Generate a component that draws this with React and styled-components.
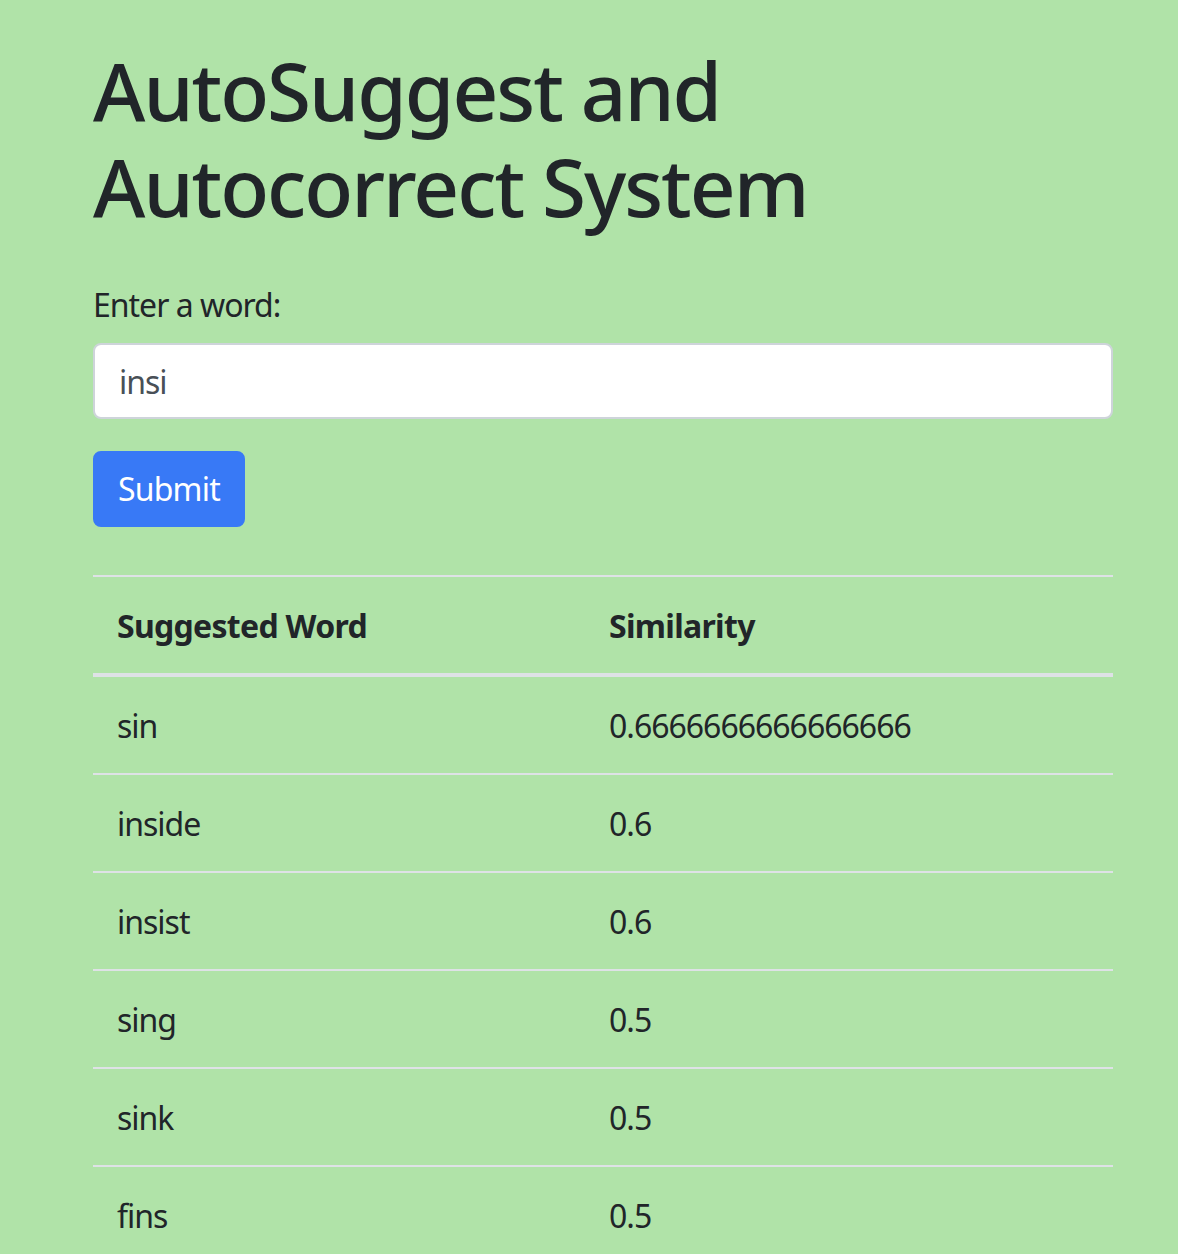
import React from "react";
import styled, { createGlobalStyle } from "styled-components";

const GlobalStyle = createGlobalStyle`
  * { box-sizing: border-box; }
  html, body { margin: 0; padding: 0; }
  body {
    background: #b0e3a8;
    color: #212529;
    font-family: "Noto Sans", "Open Sans", sans-serif;
    font-size: 32px;
    line-height: 48px;
    letter-spacing: -1px;
  }
`;

const Page = styled.main`
  padding: 42px 0 0 93px;
  width: 1113px;
`;

const Title = styled.h1`
  margin: 0 0 47px;
  font-size: 80px;
  line-height: 96px;
  font-weight: 500;
  letter-spacing: -2px;
`;

const Form = styled.form`
  display: flex;
  flex-direction: column;
  align-items: flex-start;
`;

const Label = styled.label`
  display: block;
  margin-bottom: 14px;
`;

const Input = styled.input`
  width: 100%;
  height: 76px;
  padding: 12px 24px;
  border: 2px solid #ced4da;
  border-radius: 8px;
  background: #fff;
  color: #495057;
  font: inherit;
  letter-spacing: inherit;
  outline: none;
  margin-bottom: 32px;
`;

const Button = styled.button`
  height: 76px;
  padding: 12px 23px;
  border: 2px solid #3879f6;
  border-radius: 8px;
  background: #3879f6;
  color: #fff;
  font: inherit;
  letter-spacing: -0.8px;
  cursor: pointer;
`;

const Table = styled.table`
  width: 100%;
  margin-top: 48px;
  border-collapse: collapse;
`;

const Th = styled.th`
  text-align: left;
  font-weight: 700;
  padding: 25px 24px 23px;
  border-top: 2px solid #dee2e6;
  border-bottom: 4px solid #dee2e6;
  width: ${(p) => p.$w || "auto"};
  letter-spacing: -0.7px;
`;

const Td = styled.td`
  padding: 25px 24px 23px;
  border-top: 2px solid #dee2e6;
`;

const rows = [
  ["sin", "0.6666666666666666"],
  ["inside", "0.6"],
  ["insist", "0.6"],
  ["sing", "0.5"],
  ["sink", "0.5"],
  ["fins", "0.5"],
];

export default function App() {
  return (
    <>
      <GlobalStyle />
      <Page>
        <Title>
          AutoSuggest and
          <br />
          Autocorrect System
        </Title>
        <Form onSubmit={(e) => e.preventDefault()}>
          <Label htmlFor="word">Enter a word:</Label>
          <Input id="word" defaultValue="insi" />
          <Button type="submit">Submit</Button>
        </Form>
        <Table>
          <thead>
            <tr>
              <Th $w="492px">Suggested Word</Th>
              <Th>Similarity</Th>
            </tr>
          </thead>
          <tbody>
            {rows.map(([w, s]) => (
              <tr key={w}>
                <Td>{w}</Td>
                <Td>{s}</Td>
              </tr>
            ))}
          </tbody>
        </Table>
      </Page>
    </>
  );
}
